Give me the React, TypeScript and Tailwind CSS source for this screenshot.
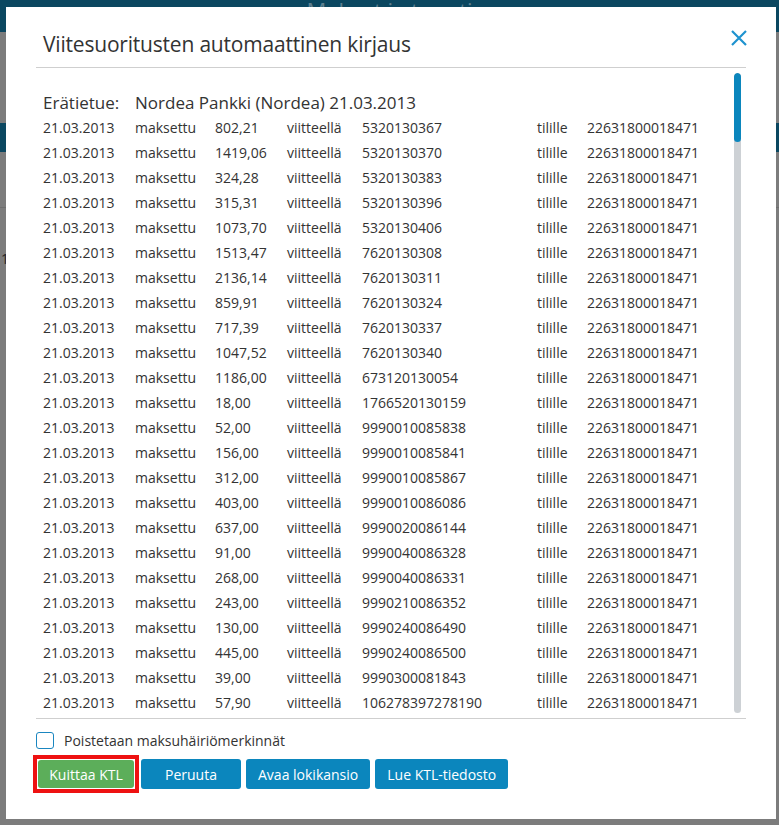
import React from 'react';

type Payment = { amount: string; ref: string };

const payments: Payment[] = [
  { amount: '802,21', ref: '5320130367' },
  { amount: '1419,06', ref: '5320130370' },
  { amount: '324,28', ref: '5320130383' },
  { amount: '315,31', ref: '5320130396' },
  { amount: '1073,70', ref: '5320130406' },
  { amount: '1513,47', ref: '7620130308' },
  { amount: '2136,14', ref: '7620130311' },
  { amount: '859,91', ref: '7620130324' },
  { amount: '717,39', ref: '7620130337' },
  { amount: '1047,52', ref: '7620130340' },
  { amount: '1186,00', ref: '673120130054' },
  { amount: '18,00', ref: '1766520130159' },
  { amount: '52,00', ref: '9990010085838' },
  { amount: '156,00', ref: '9990010085841' },
  { amount: '312,00', ref: '9990010085867' },
  { amount: '403,00', ref: '9990010086086' },
  { amount: '637,00', ref: '9990020086144' },
  { amount: '91,00', ref: '9990040086328' },
  { amount: '268,00', ref: '9990040086331' },
  { amount: '243,00', ref: '9990210086352' },
  { amount: '130,00', ref: '9990240086490' },
  { amount: '445,00', ref: '9990240086500' },
  { amount: '39,00', ref: '9990300081843' },
  { amount: '57,90', ref: '106278397278190' },
];

const font = { fontFamily: '"Open Sans", "Noto Sans", sans-serif' };

function PaymentRow({ p }: { p: Payment }) {
  return (
    <div className="grid grid-cols-[92px_80px_72px_75px_175px_50px_1fr] h-[25px] items-center text-[14px] text-[#333]">
      <span>21.03.2013</span>
      <span>maksettu</span>
      <span>{p.amount}</span>
      <span>viitteellä</span>
      <span>{p.ref}</span>
      <span>tilille</span>
      <span>22631800018471</span>
    </div>
  );
}

function Btn({ children, green }: { children: React.ReactNode; green?: boolean }) {
  return (
    <button
      className={
        green
          ? 'h-[28px] w-[96px] rounded-[3px] bg-[#5cae5a] text-white text-[14px]'
          : 'h-[30px] min-w-[100px] px-[12px] rounded-[3px] bg-[#0b86bd] text-white text-[14px]'
      }
    >
      {children}
    </button>
  );
}

export default function App() {
  return (
    <div className="relative w-[779px] h-[825px] overflow-hidden bg-[#7c7c7c]" style={font}>
      {/* page behind the overlay */}
      <div className="h-[32px] bg-[#0b4760] flex justify-center">
        <span className="text-[#5d7f8f] text-[22px] leading-[16px] pt-[2px]">Maksut ja tuonti</span>
      </div>
      <div className="h-[91px]" />
      <div className="h-[29px] bg-[#0b4760]" />
      <div className="h-[56px] border-b border-[#6e6e6e]" />
      <div className="text-[#222] text-[14px] pt-[40px] pl-[1px] w-[20px]">1</div>

      {/* modal */}
      <div className="absolute left-[6px] top-[7px] w-[770px] h-[812px] bg-white flex flex-col">
        <div className="px-[30px] pt-[22px]">
          <div className="flex items-start justify-between">
            <h1 className="pl-[7px] text-[21px] leading-[30px] tracking-[-0.2px] text-[#333]">
              Viitesuoritusten automaattinen kirjaus
            </h1>
            <svg className="mr-[-2px]" width="18" height="18" viewBox="0 0 18 18">
              <path d="M2 2 L16 16 M16 2 L2 16" stroke="#1f93cf" strokeWidth="2.2" />
            </svg>
          </div>
          <div className="mt-[8px] border-b border-[#cfcfcf]" />
        </div>

        <div className="mx-[30px] h-[651px] flex border-b border-[#cfcfcf]">
          <div className="flex-1 overflow-hidden pl-[7px] pt-[23px]">
            <div className="flex h-[24px] items-center text-[17px] text-[#333]">
              <span className="w-[92px]">Erätietue:</span>
              <span>Nordea Pankki (Nordea) 21.03.2013</span>
            </div>
            {payments.map((p, i) => (
              <PaymentRow key={i} p={p} />
            ))}
          </div>
          <div className="w-[7px] mr-[5px] mt-[5px] mb-[5px] rounded-full bg-[#cdd1d5] overflow-hidden">
            <div className="h-[69px] rounded-full bg-[#0b86bd]" />
          </div>
        </div>

        <div className="px-[30px] pt-[11px]">
          <label className="flex items-center gap-[10px] text-[14px] text-[#333]">
            <span className="w-[18px] h-[17px] rounded-[3px] border-[1.5px] border-[#1a86c0] bg-white" />
            Poistetaan maksuhäiriömerkinnät
          </label>
          <div className="mt-[8px] flex items-center gap-[5px] -ml-[3px]">
            <div className="border-[4px] border-[#ee1111] p-[1px] -my-[4px] -mr-[3px]">
              <Btn green>Kuittaa KTL</Btn>
            </div>
            <Btn>Peruuta</Btn>
            <Btn>Avaa lokikansio</Btn>
            <Btn>Lue KTL-tiedosto</Btn>
          </div>
        </div>
      </div>
    </div>
  );
}
